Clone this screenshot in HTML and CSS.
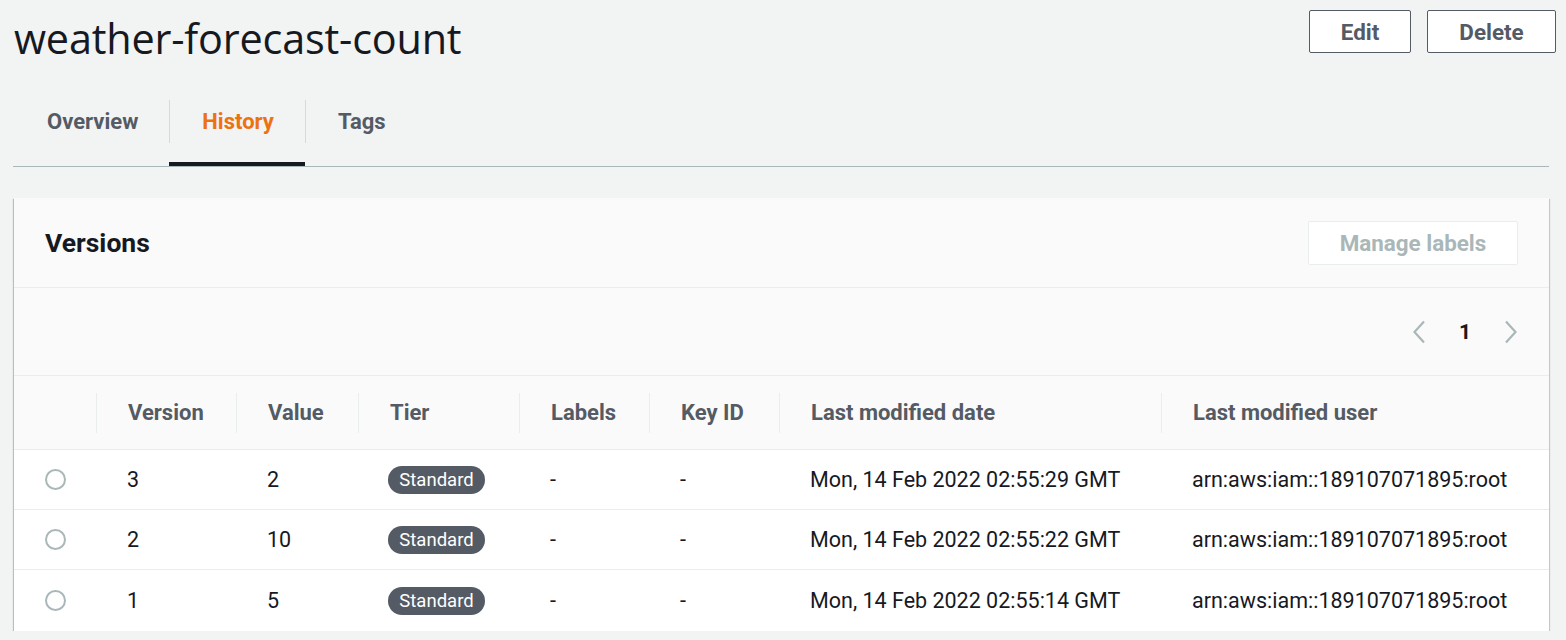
FILE: index.html
```html
<!DOCTYPE html>
<html>
<head>
<meta charset="utf-8">
<link rel="stylesheet" href="styles.css">
</head>
<body>
<div class="page">
  <header class="page-header">
    <h1 class="title">weather-forecast-count</h1>
    <div class="actions">
      <button class="btn btn-edit">Edit</button>
      <button class="btn btn-delete">Delete</button>
    </div>
  </header>

  <nav class="tabs">
    <div class="tab"><span class="tab-label first">Overview</span></div>
    <div class="tab tab-active"><span class="tab-label sep">History</span></div>
    <div class="tab"><span class="tab-label sep">Tags</span></div>
  </nav>

  <section class="card">
    <div class="card-header">
      <h2 class="card-title">Versions</h2>
      <button class="btn btn-disabled">Manage labels</button>
    </div>
    <div class="pager-row">
      <div class="pager">
        <svg class="chev" width="14" height="24" viewBox="0 0 14 24"><path d="M12 1.5 L2.5 12 L12 22.5" fill="none" stroke="#aab7b8" stroke-width="2.2"/></svg>
        <span class="page-num">1</span>
        <svg class="chev" width="14" height="24" viewBox="0 0 14 24"><path d="M2 1.5 L11.5 12 L2 22.5" fill="none" stroke="#aab7b8" stroke-width="2.2"/></svg>
      </div>
    </div>
    <div class="table">
      <div class="thead">
        <div class="th th-first"></div>
        <div class="th"><span>Version</span></div>
        <div class="th"><span>Value</span></div>
        <div class="th"><span>Tier</span></div>
        <div class="th"><span>Labels</span></div>
        <div class="th"><span>Key ID</span></div>
        <div class="th"><span>Last modified date</span></div>
        <div class="th"><span>Last modified user</span></div>
      </div>
      <div class="tr">
        <div class="td td-radio"><span class="radio"></span></div>
        <div class="td">3</div>
        <div class="td">2</div>
        <div class="td"><span class="badge">Standard</span></div>
        <div class="td">-</div>
        <div class="td">-</div>
        <div class="td">Mon, 14 Feb 2022 02:55:29 GMT</div>
        <div class="td">arn:aws:iam::189107071895:root</div>
      </div>
      <div class="tr">
        <div class="td td-radio"><span class="radio"></span></div>
        <div class="td">2</div>
        <div class="td">10</div>
        <div class="td"><span class="badge">Standard</span></div>
        <div class="td">-</div>
        <div class="td">-</div>
        <div class="td">Mon, 14 Feb 2022 02:55:22 GMT</div>
        <div class="td">arn:aws:iam::189107071895:root</div>
      </div>
      <div class="tr tr-last">
        <div class="td td-radio"><span class="radio"></span></div>
        <div class="td">1</div>
        <div class="td">5</div>
        <div class="td"><span class="badge">Standard</span></div>
        <div class="td">-</div>
        <div class="td">-</div>
        <div class="td">Mon, 14 Feb 2022 02:55:14 GMT</div>
        <div class="td">arn:aws:iam::189107071895:root</div>
      </div>
    </div>
  </section>
</div>
</body>
</html>
```

FILE: styles.css
```css
* { box-sizing: border-box; }
html, body {
  margin: 0;
  padding: 0;
  background: #f2f3f3;
}
body {
  font-family: Roboto, "Noto Sans", Arial, sans-serif;
  color: #16191f;
}
.page {
  padding: 10px 17px 0 13px;
}
.page-header {
  display: flex;
  justify-content: space-between;
  align-items: flex-start;
  height: 68px;
}
.title {
  margin: 3px 0 0 1px;
  font-family: "Open Sans", sans-serif;
  font-weight: 400;
  font-size: 41.4px;
  line-height: 50px;
  color: #16191f;
  letter-spacing: -0.2px;
}
.actions {
  display: flex;
  gap: 16px;
  margin-right: -7px;
}
.btn {
  font-family: Roboto, Arial, sans-serif;
  font-weight: 700;
  font-size: 22.4px;
  color: #545b64;
  background: #fff;
  border: 1px solid #545b64;
  border-radius: 2px;
  height: 43px;
  padding: 0;
  cursor: pointer;
}
.btn-edit { width: 102px; }
.btn-delete { width: 129px; }
.btn-disabled {
  color: #aab7b8;
  border-color: #eaeded;
  width: 210px;
  height: 44px;
}

.tabs {
  display: flex;
  border-bottom: 1px solid #aab7b8;
  height: 89px;
}
.tab {
  height: 88px;
  display: flex;
  align-items: center;
  padding-top: 3px;
  border-bottom: 4px solid transparent;
}
.tab-label {
  display: flex;
  align-items: center;
  height: 43px;
  padding: 0 31px 0 32px;
  font-weight: 700;
  font-size: 22px;
  color: #545b64;
}
.tab-label.first { padding-left: 34px; }
.tab-label.sep {
  border-left: 1px solid #d5dbdb;
}
.tab-active {
  border-bottom-color: #16191f;
}
.tab-active .tab-label { color: #ec7211; }

.card {
  margin-top: 31px;
  margin-left: 1px;
  background: #fff;
  box-shadow: 0 1px 1px 0 rgba(0, 28, 36, 0.3), 1px 1px 1px 0 rgba(0, 28, 36, 0.15), -1px 1px 1px 0 rgba(0, 28, 36, 0.2);
}
.card-header {
  display: flex;
  justify-content: space-between;
  align-items: center;
  height: 90px;
  padding: 0 31px;
  background: #fafafa;
  border-bottom: 1px solid #eaeded;
}
.card-title {
  margin: 0;
  font-size: 26.5px;
  font-weight: 700;
  color: #16191f;
}
.pager-row {
  display: flex;
  justify-content: flex-end;
  align-items: center;
  height: 88px;
  padding-right: 31px;
  background: #fafafa;
  border-bottom: 1px solid #eaeded;
}
.pager {
  display: flex;
  align-items: center;
  gap: 33px;
}
.page-num {
  font-weight: 700;
  font-size: 21px;
  color: #16191f;
}
.table {
  display: grid;
  grid-template-columns: 82px 140px 122px 161px 130px 130px 382px 1fr;
}
.thead, .tr { display: contents; }
.th {
  height: 74px;
  background: #fafafa;
  border-bottom: 1px solid #eaeded;
  display: flex;
  align-items: center;
  font-weight: 700;
  font-size: 22px;
  color: #545b64;
}
.th span {
  display: flex;
  align-items: center;
  height: 40px;
  padding-left: 31px;
  border-left: 1px solid #eaeded;
  width: 100%;
}
.td {
  height: 60px;
  display: flex;
  align-items: center;
  padding-left: 31px;
  border-bottom: 1px solid #eaeded;
  font-size: 21.5px;
  color: #16191f;
}
.tr-last .td { border-bottom: none; height: 61px; }
.radio {
  width: 21px;
  height: 21px;
  border: 2px solid #aab7b8;
  border-radius: 50%;
  background: #fff;
}
.badge {
  display: inline-flex;
  align-items: center;
  justify-content: center;
  width: 97px;
  height: 28px;
  background: #545b64;
  color: #fff;
  border-radius: 14px;
  font-size: 18.5px;
  margin-left: -1px;
}
```
